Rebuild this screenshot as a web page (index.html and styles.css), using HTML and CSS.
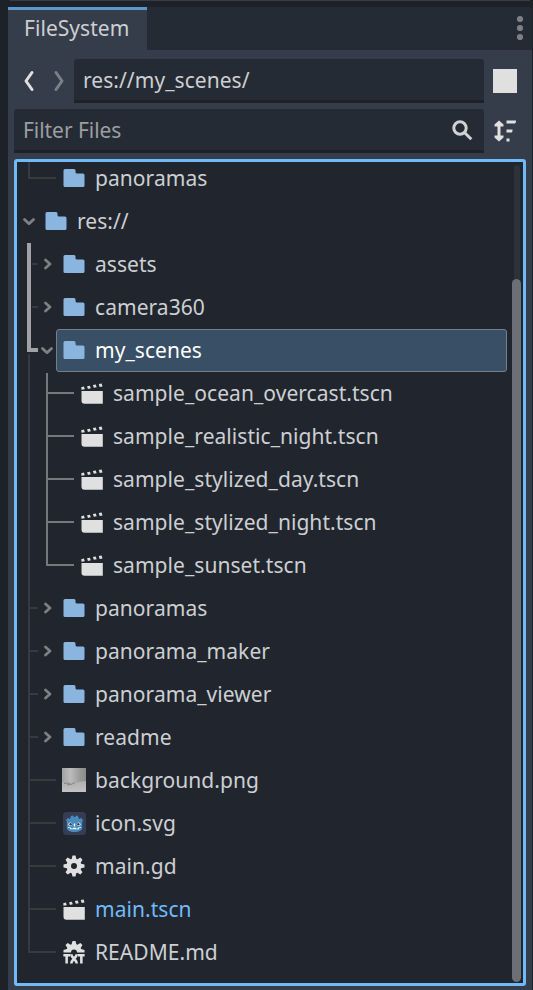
FILE: index.html
```html
<!DOCTYPE html>
<html lang="en">
<head>
<meta charset="utf-8">
<title>FileSystem</title>
<link rel="stylesheet" href="styles.css">
</head>
<body>
<svg class="defs" width="0" height="0">
  <symbol id="folder" viewBox="0 0 16 16"><path fill="#8ab5df" d="M2 2a1 1 0 0 0-1 1v10a1 1 0 0 0 1 1h12a1 1 0 0 0 1-1V6a1 1 0 0 0-1-1h-4a1 1 0 0 1-1-1V3a1 1 0 0 0-1-1z"/></symbol>
  <symbol id="scene" viewBox="0 0 16 16"><path fill="#e0e0e0" d="M1 6.600h14.200V15.200H3a2 2 0 0 1-2-2zM.8 4.100l1.800-.4.6 1.800-2.200.4zM4.700 3.500l1.900-.4.6 1.800-1.900.4zM8.600 2.700l1.900-.4.6 1.800-1.900.4zM12.500 2l1.900-.4.6 2-1.900.4z"/></symbol>
  <symbol id="gear" viewBox="0 0 16 16"><path fill="#e0e0e0" d="M7 1l-.56 2.26a5 5 0 0 0-.69.28L3.76 2.34 2.34 3.76l1.2 1.99a5 5 0 0 0-.29.69L1 7v2l2.26.56a5 5 0 0 0 .28.69l-1.2 1.99 1.42 1.42 1.99-1.2a5 5 0 0 0 .69.29L7 15h2l.56-2.26a5 5 0 0 0 .69-.28l1.99 1.2 1.42-1.42-1.2-1.99a5 5 0 0 0 .29-.69L15 9V7l-2.26-.56a5 5 0 0 0-.28-.69l1.2-1.99-1.42-1.42-1.99 1.2a5 5 0 0 0-.69-.29L9 1zm1 5a2 2 0 0 1 0 4 2 2 0 0 1 0-4z"/></symbol>
  <symbol id="textfile" viewBox="0 0 16 16"><path fill="#e0e0e0" d="M7 .6l-.56 2.26a5 5 0 0 0-.69.28L3.76 1.94 2.34 3.36l1.2 1.99a5 5 0 0 0-.29.69L1 6.600v1.800h5A2 2 0 1 1 10 8.400h5V6.600l-2.260-.560a5 5 0 0 0-.280-.690l1.200-1.990-1.420-1.420-1.990 1.200a5 5 0 0 0-.690-.290L9 .6z"/><path fill="none" stroke="#e0e0e0" stroke-width="1.7" d="M.9 10.200h4.500M3.100 10v5.600M10.600 10.200h4.500M12.900 10v5.600M6.200 9.500c0 2.500 3.600 3.500 3.600 6.100M9.800 9.500c0 2.500-3.600 3.500-3.600 6.100"/></symbol>
  <symbol id="godot" viewBox="0 0 24 24"><rect x="1" width="23" height="23" rx="3.500" fill="#363d52"/><path fill="#478cbf" d="M4 8l2-2 2 1 1-3 2-.5.8 1.500h1.400l.8-1.500 2 .5 1 3 2-1 2 2-.8 2v6c0 2-3 4-7.700 4S4.800 18 4.800 16v-6z"/><g fill="#fff"><circle cx="8.300" cy="12.200" r="1.800"/><circle cx="16.700" cy="12.200" r="1.800"/><path d="M11.800 11.500h1.400v3h-1.400zM6 15.300l3 .3v1h2v-.8h3v.8h2v-1l3-.3v.6l-2 .2v1.200H8v-1.200l-2-.2z"/></g><g fill="#343c48"><circle cx="8.600" cy="12.300" r="1.200"/><circle cx="16.400" cy="12.300" r="1.200"/></g></symbol>
  <symbol id="photo" viewBox="0 0 24 24">
    <linearGradient id="sky" x2="1"><stop stop-color="#a2a2a2"/><stop offset=".35" stop-color="#bcbcbc"/><stop offset=".75" stop-color="#999"/><stop offset="1" stop-color="#8a8a8a"/></linearGradient>
    <linearGradient id="ground" x2="0" y2="1"><stop stop-color="#aeaeae"/><stop offset="1" stop-color="#c3c3c3"/></linearGradient>
    <path fill="url(#sky)" d="M0 0h24v16H0z"/><path fill="url(#ground)" d="M0 14q7 0 12 1 6-2 12-2v11H0z"/><path fill="none" stroke="#858585" d="M2 15.500l4-.5 3 1.500 4-2M5 17l3-.5"/>
  </symbol>
  <symbol id="stub" viewBox="0 0 39 43"><path class="dim" d="M12 0v43M12 21h9"/><path class="arrow" d="M28.500 17l4.500 4-4.500 4"/></symbol>
  <symbol id="stub-lit" viewBox="0 0 39 43"><path class="dim" d="M15 21h6"/><path class="lit" d="M12 0v43"/><path class="arrow" d="M28.500 17l4.500 4-4.500 4"/></symbol>
  <symbol id="turn-lit" viewBox="0 0 39 43"><path class="dim" d="M12 25v18"/><path class="lit" d="M12 0v21h9"/><path class="arrow" d="M25.500 19.500l4.500 4.300 4.500-4.300"/></symbol>
  <symbol id="leaf" viewBox="0 0 39 43"><path class="dim" d="M12 0v43M12 21h27"/></symbol>
  <symbol id="leaf-end" viewBox="0 0 39 43"><path class="dim" d="M12 0v21h27"/></symbol>
  <symbol id="child" viewBox="0 0 57 43"><path class="dim" d="M12 0v43"/><path class="mid" d="M30 0v43M30 21h27"/></symbol>
  <symbol id="child-first" viewBox="0 0 57 43"><path class="dim" d="M12 0v43"/><path class="mid" d="M30 1v42M30 21h27"/></symbol>
  <symbol id="child-end" viewBox="0 0 57 43"><path class="dim" d="M12 0v43"/><path class="mid" d="M30 0v21h27"/></symbol>
  <symbol id="root" viewBox="0 0 21 43"><path class="arrow" d="M7.500 19.500l4.500 4.300 4.500-4.300"/></symbol>
</svg>
<div class="above"></div>
<main class="dock">
  <header class="tabs">
    <div class="tab">FileSystem</div>
    <svg class="dots" width="8" height="26" viewBox="0 0 8 26"><g fill="#7c7f84"><circle cx="4" cy="4" r="3.100"/><circle cx="4" cy="13" r="3.100"/><circle cx="4" cy="22" r="3.100"/></g></svg>
  </header>
  <section class="bar">
    <svg class="nav" width="60" height="24" viewBox="0 0 60 24"><g fill="none" stroke-width="3" stroke-linecap="round" stroke-linejoin="round"><path stroke="#e0e0e0" d="M18 3.500l-6 8.500 6 8.500"/><path stroke="#7c8087" d="M42 3.500l6 8.500-6 8.500"/></g></svg>
    <div class="field">res://my_scenes/</div>
    <div class="square"></div>
  </section>
  <section class="bar search">
    <div class="field hint"><span>Filter Files</span>
      <svg width="24" height="24" viewBox="0 0 24 24"><g fill="none" stroke="#d0d1d2"><circle cx="9" cy="9" r="6.200" stroke-width="3"/><path stroke-width="3" d="M13.500 13.500l6.800 6.800"/></g></svg>
    </div>
    <svg class="sort" width="24" height="24" viewBox="0 0 24 24"><path fill="#e0e0e0" d="M6 1.500L1.500 5.500V7.500H4.500v9h-3v2L6 22.500l4.500-4v-2h-3v-9h3v-2zM13.500 1.500h9.500V3L22 4.500h-8.500zM13.500 10.500h6v1.800l-.8 1.200h-5.200zM13.500 19.500h3v3h-3z"/></svg>
  </section>
  <section class="tree">
    <div class="rows">
      <div class="row"><svg class="g1"><use href="#leaf-end"/></svg><div class="item"><svg class="icon"><use href="#folder"/></svg>panoramas</div></div>
      <div class="row"><svg class="g0"><use href="#root"/></svg><div class="item"><svg class="icon"><use href="#folder"/></svg>res://</div></div>
      <div class="row"><svg class="g1"><use href="#stub-lit"/></svg><div class="item"><svg class="icon"><use href="#folder"/></svg>assets</div></div>
      <div class="row"><svg class="g1"><use href="#stub-lit"/></svg><div class="item"><svg class="icon"><use href="#folder"/></svg>camera360</div></div>
      <div class="row"><svg class="g1"><use href="#turn-lit"/></svg><div class="item selected"><svg class="icon"><use href="#folder"/></svg>my_scenes</div></div>
      <div class="row"><svg class="g2"><use href="#child-first"/></svg><div class="item"><svg class="icon"><use href="#scene"/></svg>sample_ocean_overcast.tscn</div></div>
      <div class="row"><svg class="g2"><use href="#child"/></svg><div class="item"><svg class="icon"><use href="#scene"/></svg>sample_realistic_night.tscn</div></div>
      <div class="row"><svg class="g2"><use href="#child"/></svg><div class="item"><svg class="icon"><use href="#scene"/></svg>sample_stylized_day.tscn</div></div>
      <div class="row"><svg class="g2"><use href="#child"/></svg><div class="item"><svg class="icon"><use href="#scene"/></svg>sample_stylized_night.tscn</div></div>
      <div class="row"><svg class="g2"><use href="#child-end"/></svg><div class="item"><svg class="icon"><use href="#scene"/></svg>sample_sunset.tscn</div></div>
      <div class="row"><svg class="g1"><use href="#stub"/></svg><div class="item"><svg class="icon"><use href="#folder"/></svg>panoramas</div></div>
      <div class="row"><svg class="g1"><use href="#stub"/></svg><div class="item"><svg class="icon"><use href="#folder"/></svg>panorama_maker</div></div>
      <div class="row"><svg class="g1"><use href="#stub"/></svg><div class="item"><svg class="icon"><use href="#folder"/></svg>panorama_viewer</div></div>
      <div class="row"><svg class="g1"><use href="#stub"/></svg><div class="item"><svg class="icon"><use href="#folder"/></svg>readme</div></div>
      <div class="row"><svg class="g1"><use href="#leaf"/></svg><div class="item"><svg class="icon"><use href="#photo"/></svg>background.png</div></div>
      <div class="row"><svg class="g1"><use href="#leaf"/></svg><div class="item"><svg class="icon thumb-low"><use href="#godot"/></svg>icon.svg</div></div>
      <div class="row"><svg class="g1"><use href="#leaf"/></svg><div class="item"><svg class="icon"><use href="#gear"/></svg>main.gd</div></div>
      <div class="row"><svg class="g1"><use href="#leaf"/></svg><div class="item main"><svg class="icon"><use href="#scene"/></svg>main.tscn</div></div>
      <div class="row"><svg class="g1"><use href="#leaf-end"/></svg><div class="item"><svg class="icon"><use href="#textfile"/></svg>README.md</div></div>
    </div>
    <div class="scroll"><div class="track"></div><div class="thumb"></div></div>
  </section>
</main>
</body>
</html>
```
FILE: styles.css
```css
* { box-sizing: border-box; }
body {
  margin: 0;
  height: 990px;
  overflow: hidden;
  background: #1d2229;
  color: #cdcfd2;
  font: 21px/30px "Noto Sans", sans-serif;
  letter-spacing: .05px;
}
svg { display: block; flex: none; }
.defs { position: absolute; }
.above { height: 1px; margin: 0 3px 6px 10px; background: #363d4a; }
.dock {
  height: 983px;
  margin: 0 1px 0 8px;
  background: #363d4a;
  border-radius: 0 5px 0 0;
  overflow: hidden;
}
.tabs {
  display: flex;
  justify-content: space-between;
  height: 43px;
  padding-right: 8px;
  background: #252b34;
}
.tab {
  width: 139px;
  padding: 3px 0 0 16px;
  border-top: 3px solid #5c97cc;
  background: #363d4a;
}
.dots { margin-top: 8px; }
.bar {
  display: flex;
  align-items: center;
  height: 44px;
  margin: 9px 0 0 6px;
}
.bar.search { margin-top: 6px; }
.field {
  display: flex;
  justify-content: space-between;
  width: 410px;
  height: 44px;
  padding: 6px 9px 0;
  background: #252b34;
  border-bottom: 3px solid #1d2229;
  border-radius: 3px 3px 0 0;
}
.hint { width: 470px; color: #9b9ea2; letter-spacing: -.05px; }
.hint svg { margin-top: 4px; margin-right: 0; }
.nav { width: 60px; }
.square { width: 24px; height: 24px; margin-left: 9px; background: #e0e0e0; }
.sort { margin-left: 9px; }
.tree {
  display: flex;
  justify-content: space-between;
  width: 512px;
  height: 827px;
  margin: 6px 0 0 6px;
  border: 3px solid #70bafa;
  border-radius: 3px;
  background: #21262e;
  overflow: hidden;
}
.rows { width: 490px; margin-top: -5px; }
.row { display: flex; height: 43px; }
.g0 { width: 21px; height: 43px; }
.g1 { width: 39px; height: 43px; }
.g2 { width: 57px; height: 43px; }
.item {
  flex: 1;
  display: flex;
  height: 43px;
  padding: 5px 5px 0;
  border: 1px solid transparent;
  border-radius: 3px;
}
.icon { width: 24px; height: 24px; margin: 3px 9px 0 0; }
.thumb-low { margin-top: 4px; }
.selected { background: #384f66; border-color: #757f8a; color: #fff; }
.main { color: #70bafa; }
.dim { stroke: #363b42; stroke-width: 2; fill: none; }
.mid { stroke: #75787d; stroke-width: 2; fill: none; }
.lit { stroke: #a0a2a5; stroke-width: 4; fill: none; }
.arrow { stroke: #7d8085; stroke-width: 2.8; fill: none; stroke-linecap: round; stroke-linejoin: round; }
.scroll {
  display: flex;
  flex-direction: column;
  align-items: center;
  width: 9px;
  margin: 3px 2px 1px 0;
}
.track { width: 6px; height: 114px; background: #2d3139; border-radius: 3px 3px 0 0; }
.thumb { width: 9px; height: 703px; background: #6c6f75; border-radius: 5px; }
```
